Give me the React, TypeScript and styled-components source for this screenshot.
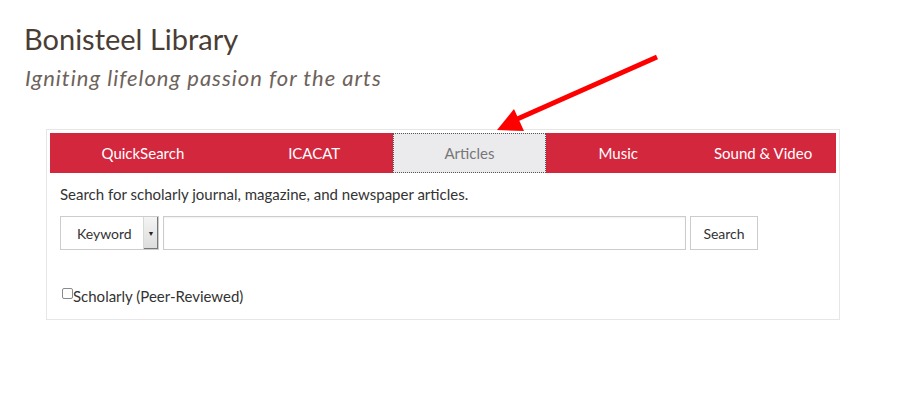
import React from 'react';
import styled, { createGlobalStyle } from "styled-components";

const GlobalStyle = createGlobalStyle`
  body {
    margin: 0;
    background: #ffffff;
    font-family: "Lato", "Open Sans", sans-serif;
  }
`;

const Page = styled.div`
  position: relative;
  width: 904px;
  height: 395px;
  padding: 21px 0 0 24px;
  box-sizing: border-box;
`;

const Title = styled.h1`
  margin: 0;
  font-size: 29px;
  font-weight: 400;
  line-height: 36px;
  color: #4a3d35;
`;

const Tagline = styled.p`
  margin: 7px 0 0 1px;
  font-size: 22px;
  font-style: italic;
  letter-spacing: 1px;
  line-height: 28px;
  color: #6e625b;
`;

const Panel = styled.div`
  margin: 37px 0 0 22px;
  width: 794px;
  box-sizing: border-box;
  border: 1px solid #e6e6e6;
  padding: 3px 3px 0 3px;
`;

const TabBar = styled.div`
  display: flex;
  height: 40px;
  background: #d3273e;
`;

const Tab = styled.div<{ $w: number; $active?: boolean }>`
  width: ${p => p.$w}px;
  display: flex;
  align-items: center;
  justify-content: center;
  box-sizing: border-box;
  font-size: 15px;
  color: ${p => (p.$active ? "#777777" : "#ffffff")};
  background: ${p => (p.$active ? "#ebebed" : "transparent")};
  border: ${p => (p.$active ? "1px dotted #555" : "none")};
`;

const Body = styled.div`
  padding: 11px 10px 13px 10px;
`;

const Intro = styled.p`
  margin: 0;
  font-size: 15px;
  line-height: 20px;
  color: #333333;
`;

const FormRow = styled.div`
  display: flex;
  gap: 4px;
  margin-top: 12px;
  height: 34px;
`;

const Select = styled.div`
  width: 99px;
  display: flex;
  box-sizing: border-box;
  border: 1px solid #cccccc;
  background: #ffffff;
`;

const SelectLabel = styled.div`
  flex: 1;
  display: flex;
  align-items: center;
  padding-left: 16px;
  font-size: 14px;
  color: #333333;
`;

const SelectArrow = styled.div`
  width: 14px;
  display: flex;
  align-items: center;
  justify-content: center;
  background: linear-gradient(#f4f4f4, #dcdcdc);
  border-left: 1px solid #d8d8d8;
  box-shadow: inset -1px -1px 0 #777;
  font-size: 7px;
  color: #222;
`;

const TextInput = styled.input`
  width: 523px;
  box-sizing: border-box;
  border: 1px solid #cccccc;
  box-shadow: inset 0 1px 2px rgba(0, 0, 0, 0.06);
  outline: none;
  padding: 0 8px;
  font-family: inherit;
`;

const Button = styled.button`
  width: 68px;
  box-sizing: border-box;
  border: 1px solid #cccccc;
  background: #ffffff;
  font-family: inherit;
  font-size: 14px;
  color: #333333;
  padding: 0;
`;

const CheckRow = styled.label`
  display: flex;
  align-items: center;
  margin-top: 36px;
  font-size: 15px;
  line-height: 20px;
  color: #333333;
`;

const Box = styled.span`
  width: 9px;
  height: 9px;
  margin: -5px 0 0 2px;
  border: 1px solid #8a8a8a;
  border-radius: 2px;
  background: #fff;
`;

const Arrow = styled.svg`
  position: absolute;
  left: 0;
  top: 0;
  pointer-events: none;
`;

const tabs = [
  { label: "QuickSearch", w: 186 },
  { label: "ICACAT", w: 157 },
  { label: "Articles", w: 154, active: true },
  { label: "Music", w: 144 },
  { label: "Sound & Video", w: 146 },
];

const App = () => {
  return (
    <>
      <GlobalStyle />
      <Page>
        <Title>Bonisteel Library</Title>
        <Tagline>Igniting lifelong passion for the arts</Tagline>
        <Panel>
          <TabBar>
            {tabs.map(t => (
              <Tab key={t.label} $w={t.w} $active={t.active}>{t.label}</Tab>
            ))}
          </TabBar>
          <Body>
            <Intro>Search for scholarly journal, magazine, and newspaper articles.</Intro>
            <FormRow>
              <Select>
                <SelectLabel>Keyword</SelectLabel>
                <SelectArrow>▼</SelectArrow>
              </Select>
              <TextInput />
              <Button>Search</Button>
            </FormRow>
            <CheckRow>
              <Box />
              Scholarly (Peer-Reviewed)
            </CheckRow>
          </Body>
        </Panel>
        <Arrow width="904" height="395" viewBox="0 0 904 395">
          <line x1="657" y1="57" x2="515" y2="120" stroke="#ff0000" strokeWidth="5" />
          <polygon points="497,130 514,109 524,131" fill="#ff0000" />
        </Arrow>
      </Page>
    </>
  );
};

export default App;
